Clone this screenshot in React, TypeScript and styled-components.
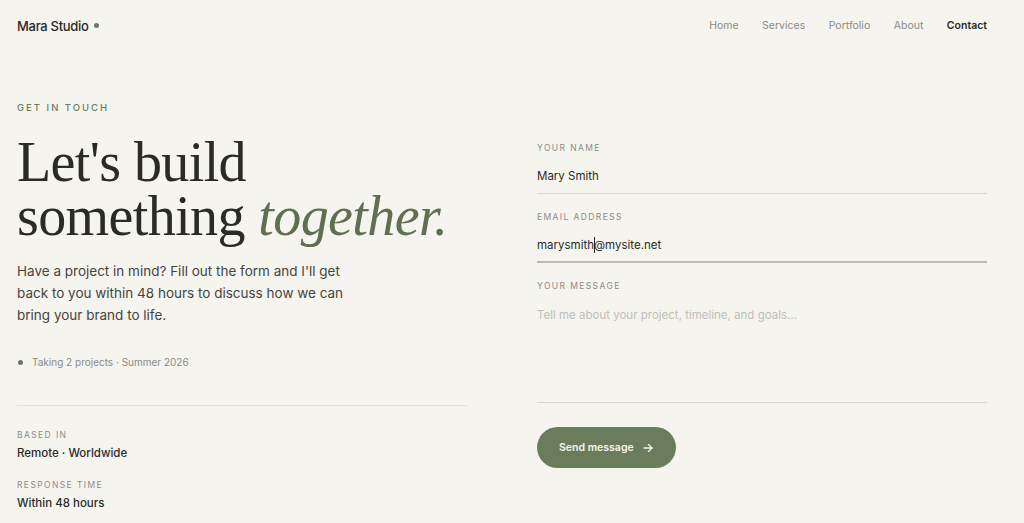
import styled, { createGlobalStyle } from 'styled-components';

const GlobalStyle = createGlobalStyle`
    * { box-sizing: border-box; }
    html, body {
        margin: 0;
        background: #f5f4ef;
    }
    body {
        font-family: 'Inter', 'Noto Sans', sans-serif;
        color: #2a2a28;
        -webkit-font-smoothing: antialiased;
    }
`;

const NAV_ITEMS = ['Home', 'Services', 'Portfolio', 'About', 'Contact'];

const App = () => {
    return (
        <Page>
            <GlobalStyle />
            <Header>
                <Brand>
                    Mara Studio
                    <BrandDot />
                </Brand>
                <Nav>
                    {NAV_ITEMS.map((item) => (
                        <NavLink key={item} $active={item === 'Contact'}>
                            {item}
                        </NavLink>
                    ))}
                </Nav>
            </Header>

            <Main>
                <Intro>
                    <Eyebrow>Get in touch</Eyebrow>
                    <Headline>
                        Let's build
                        <br />
                        something <em>together.</em>
                    </Headline>
                    <Lead>
                        Have a project in mind? Fill out the form and I'll get back to you within 48 hours to
                        discuss how we can bring your brand to life.
                    </Lead>
                    <Status>
                        <StatusDot />
                        Taking 2 projects · Summer 2026
                    </Status>
                    <Divider />
                    <Facts>
                        <Fact>
                            <FactLabel>Based in</FactLabel>
                            <FactValue>Remote · Worldwide</FactValue>
                        </Fact>
                        <Fact>
                            <FactLabel>Response time</FactLabel>
                            <FactValue>Within 48 hours</FactValue>
                        </Fact>
                    </Facts>
                </Intro>

                <Form onSubmit={(e) => e.preventDefault()}>
                    <Field>
                        <FieldLabel htmlFor="name">Your name</FieldLabel>
                        <InputWrap>
                            <TextInput id="name" defaultValue="Mary Smith" />
                        </InputWrap>
                    </Field>
                    <Field>
                        <FieldLabel htmlFor="email">Email address</FieldLabel>
                        <InputWrap>
                            <TextInput id="email" $focused defaultValue="marysmith@mysite.net" />
                            <Caret />
                        </InputWrap>
                    </Field>
                    <Field>
                        <FieldLabel htmlFor="message">Your message</FieldLabel>
                        <MessageInput
                            id="message"
                            placeholder="Tell me about your project, timeline, and goals..."
                        />
                    </Field>
                    <SendButton type="submit">
                        Send message
                        <svg width="12" height="12" viewBox="0 0 24 24" fill="none" stroke="currentColor" strokeWidth="2.6" strokeLinecap="round" strokeLinejoin="round">
                            <path d="M4 12h16" />
                            <path d="M13 5l7 7-7 7" />
                        </svg>
                    </SendButton>
                </Form>
            </Main>
        </Page>
    );
};

const Page = styled.div`
    min-height: 100vh;
    padding: 0 37px 0 17px;
`;

const Header = styled.header`
    height: 51px;
    display: flex;
    align-items: center;
    justify-content: space-between;
`;

const Brand = styled.div`
    display: flex;
    align-items: center;
    gap: 5px;
    font-size: 13px;
    font-weight: 500;
    letter-spacing: -0.3px;
    color: #2a2a28;
`;

const BrandDot = styled.span`
    width: 5px;
    height: 5px;
    border-radius: 50%;
    background: #6b7c5c;
`;

const Nav = styled.nav`
    display: flex;
    gap: 23.5px;
`;

const NavLink = styled.a<{ $active?: boolean }>`
    font-size: 10.5px;
    font-weight: ${({ $active }) => ($active ? 600 : 400)};
    color: ${({ $active }) => ($active ? '#2a2a28' : '#8c8b86')};
    cursor: pointer;
`;

const Main = styled.main`
    display: grid;
    grid-template-columns: 450px 450px;
    column-gap: 70px;
    padding-top: 50px;
`;

const Intro = styled.section`
    display: flex;
    flex-direction: column;
`;

const Eyebrow = styled.div`
    margin-top: 1px;
    font-size: 9.5px;
    font-weight: 500;
    letter-spacing: 2px;
    text-transform: uppercase;
    color: #6b7c5c;
`;

const Headline = styled.h1`
    margin: 22px 0 0;
    font-family: 'Liberation Serif', 'DejaVu Serif', serif;
    font-weight: 400;
    font-size: 56px;
    line-height: 54px;
    letter-spacing: -0.6px;
    color: #2a2a28;

    em {
        color: #5f7050;
        font-style: italic;
    }
`;

const Lead = styled.p`
    margin: 17px 0 0;
    max-width: 335px;
    font-size: 13.5px;
    line-height: 22px;
    color: #454542;
`;

const Status = styled.div`
    margin-top: 30px;
    display: flex;
    align-items: center;
    gap: 9px;
    font-size: 10px;
    color: #8c8b86;
`;

const StatusDot = styled.span`
    margin-left: 1px;
    width: 5px;
    height: 5px;
    border-radius: 50%;
    background: #6b7c5c;
`;

const Divider = styled.hr`
    margin: 37px 0 0;
    border: 0;
    border-top: 1px solid #e4e2dc;
`;

const Facts = styled.div`
    margin-top: 24px;
    display: flex;
    flex-direction: column;
    gap: 20px;
`;

const Fact = styled.div`
    display: flex;
    flex-direction: column;
    gap: 6px;
`;

const FactLabel = styled.div`
    font-size: 8.5px;
    letter-spacing: 1.4px;
    text-transform: uppercase;
    color: #8c8b86;
`;

const FactValue = styled.div`
    font-size: 11.5px;
    font-weight: 500;
    color: #2a2a28;
`;

const Form = styled.form`
    padding-top: 42px;
    display: flex;
    flex-direction: column;
    gap: 18px;
`;

const Field = styled.div`
    display: flex;
    flex-direction: column;
`;

const FieldLabel = styled.label`
    font-size: 8.5px;
    letter-spacing: 1.4px;
    text-transform: uppercase;
    color: #8c8b86;
`;

const InputWrap = styled.div`
    position: relative;
    display: flex;
    flex-direction: column;
    margin-top: 16px;
`;

const TextInput = styled.input<{ $focused?: boolean }>`
    padding: 0 0 ${({ $focused }) => ($focused ? 9 : 10)}px;
    border: 0;
    border-bottom: ${({ $focused }) => ($focused ? '2px solid #b7bcab' : '1px solid #d8d7d1')};
    background: transparent;
    font-family: inherit;
    font-size: 11.5px;
    color: #2a2a28;
    outline: none;
`;

/* text cursor sitting after "marysmith" */
const Caret = styled.span`
    position: absolute;
    left: 57px;
    top: -1px;
    width: 1px;
    height: 16px;
    background: #2a2a28;
`;

const MessageInput = styled.textarea`
    margin-top: 16px;
    height: 96px;
    padding: 0;
    border: 0;
    border-bottom: 1px solid #d8d7d1;
    background: transparent;
    font-family: inherit;
    font-size: 11.5px;
    line-height: 16px;
    color: #2a2a28;
    resize: none;
    outline: none;

    &::placeholder {
        color: #c0bfb9;
    }
`;

const SendButton = styled.button`
    align-self: flex-start;
    margin-top: 6px;
    height: 41px;
    padding: 0 22px;
    display: flex;
    align-items: center;
    gap: 8px;
    border: 0;
    border-radius: 999px;
    background: #6b7c5c;
    color: #f5f4ef;
    font-family: inherit;
    font-size: 10.5px;
    font-weight: 600;
    cursor: pointer;
`;

export default App;
